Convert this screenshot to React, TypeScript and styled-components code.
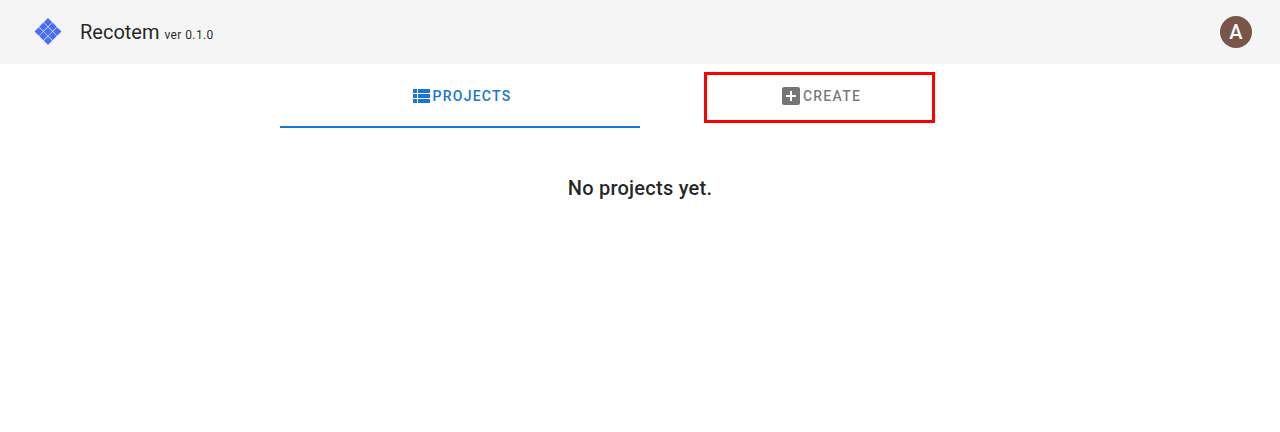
import React from "react";
import styled, { createGlobalStyle } from "styled-components";

const GlobalStyle = createGlobalStyle`
  *, *::before, *::after { box-sizing: border-box; }
  body {
    margin: 0;
    background: #ffffff;
    color: rgba(0, 0, 0, 0.87);
    font-family: Roboto, sans-serif;
    font-size: 16px;
    line-height: 24px;
  }
`;

const AppBar = styled.header`
  display: flex;
  align-items: center;
  justify-content: space-between;
  height: 64px;
  padding: 0 28px 0 32px;
  background: #f5f5f5;
`;

const Brand = styled.div`
  display: flex;
  align-items: center;
  gap: 16px;
`;

const Title = styled.h1`
  margin: 0;
  font-size: 20px;
  font-weight: 400;
  line-height: 32px;
`;

const Version = styled.span`
  font-size: 12px;
  line-height: 20px;
  letter-spacing: 0.0333em;
`;

const Avatar = styled.button`
  width: 32px;
  height: 32px;
  padding: 0;
  border: 0;
  border-radius: 50%;
  background: #795548;
  color: #ffffff;
  font-family: inherit;
  font-size: 20px;
  font-weight: 500;
  line-height: 32px;
  text-align: center;
`;

const Tabs = styled.nav`
  display: flex;
  justify-content: center;
  height: 64px;
`;

const Tab = styled.button<{ $active?: boolean }>`
  display: flex;
  flex: 1;
  align-items: center;
  justify-content: center;
  padding: 0 16px;
  border: 0;
  background: transparent;
  box-shadow: ${(p) => (p.$active ? "inset 0 -2px 0 #1976d2" : "none")};
  color: ${(p) => (p.$active ? "#1976d2" : "rgba(0, 0, 0, 0.54)")};
  font-family: inherit;
  font-size: 14px;
  font-weight: 500;
  letter-spacing: 0.0893em;
  text-transform: uppercase;
`;

const TabIcon = styled.svg`
  width: 24px;
  height: 24px;
  fill: currentColor;
`;

const Highlight = styled.span`
  position: absolute;
  inset: 8px 65px 5px 64px;
  border: 3px solid #ff0000;
  pointer-events: none;
`;

const TabSlot = styled.div`
  position: relative;
  display: flex;
  flex: 0 1 360px;
`;

const Empty = styled.main`
  padding: 44px 16px;
  text-align: center;
`;

const EmptyText = styled.h2`
  margin: 0;
  font-size: 20px;
  font-weight: 500;
  line-height: 32px;
  letter-spacing: 0.0125em;
`;

const tiles = [0, 1, 2].flatMap((row) => [0, 1, 2].map((col) => ({ row, col })));

function Logo() {
  return (
    <svg width="32" height="32" viewBox="0 0 32 32" aria-hidden="true">
      <g transform="translate(16 2) rotate(45)" fill="#4a6cfa">
        {tiles.map(({ row, col }) => (
          <rect key={`${row}-${col}`} x={col * 6.5} y={row * 6.5} width="6" height="6" />
        ))}
      </g>
    </svg>
  );
}

export default function App() {
  return (
    <>
      <GlobalStyle />
      <AppBar>
        <Brand>
          <Logo />
          <Title>
            Recotem <Version>ver 0.1.0</Version>
          </Title>
        </Brand>
        <Avatar type="button" aria-label="Account">A</Avatar>
      </AppBar>
      <Tabs>
        <TabSlot>
          <Tab type="button" $active>
            <TabIcon viewBox="0 0 24 24" aria-hidden="true">
              <path d="M9,5V9H21V5M9,19H21V15H9M9,14H21V10H9M4,9H8V5H4M4,19H8V15H4M4,14H8V10H4V14Z" />
            </TabIcon>
            Projects
          </Tab>
        </TabSlot>
        <TabSlot>
          <Tab type="button">
            <TabIcon viewBox="0 0 24 24" aria-hidden="true">
              <path d="M17,13H13V17H11V13H7V11H11V7H13V11H17M19,3H5C3.89,3 3,3.89 3,5V19A2,2 0 0,0 5,21H19A2,2 0 0,0 21,19V5C21,3.89 20.1,3 19,3Z" />
            </TabIcon>
            Create
          </Tab>
          <Highlight />
        </TabSlot>
      </Tabs>
      <Empty>
        <EmptyText>No projects yet.</EmptyText>
      </Empty>
    </>
  );
}
